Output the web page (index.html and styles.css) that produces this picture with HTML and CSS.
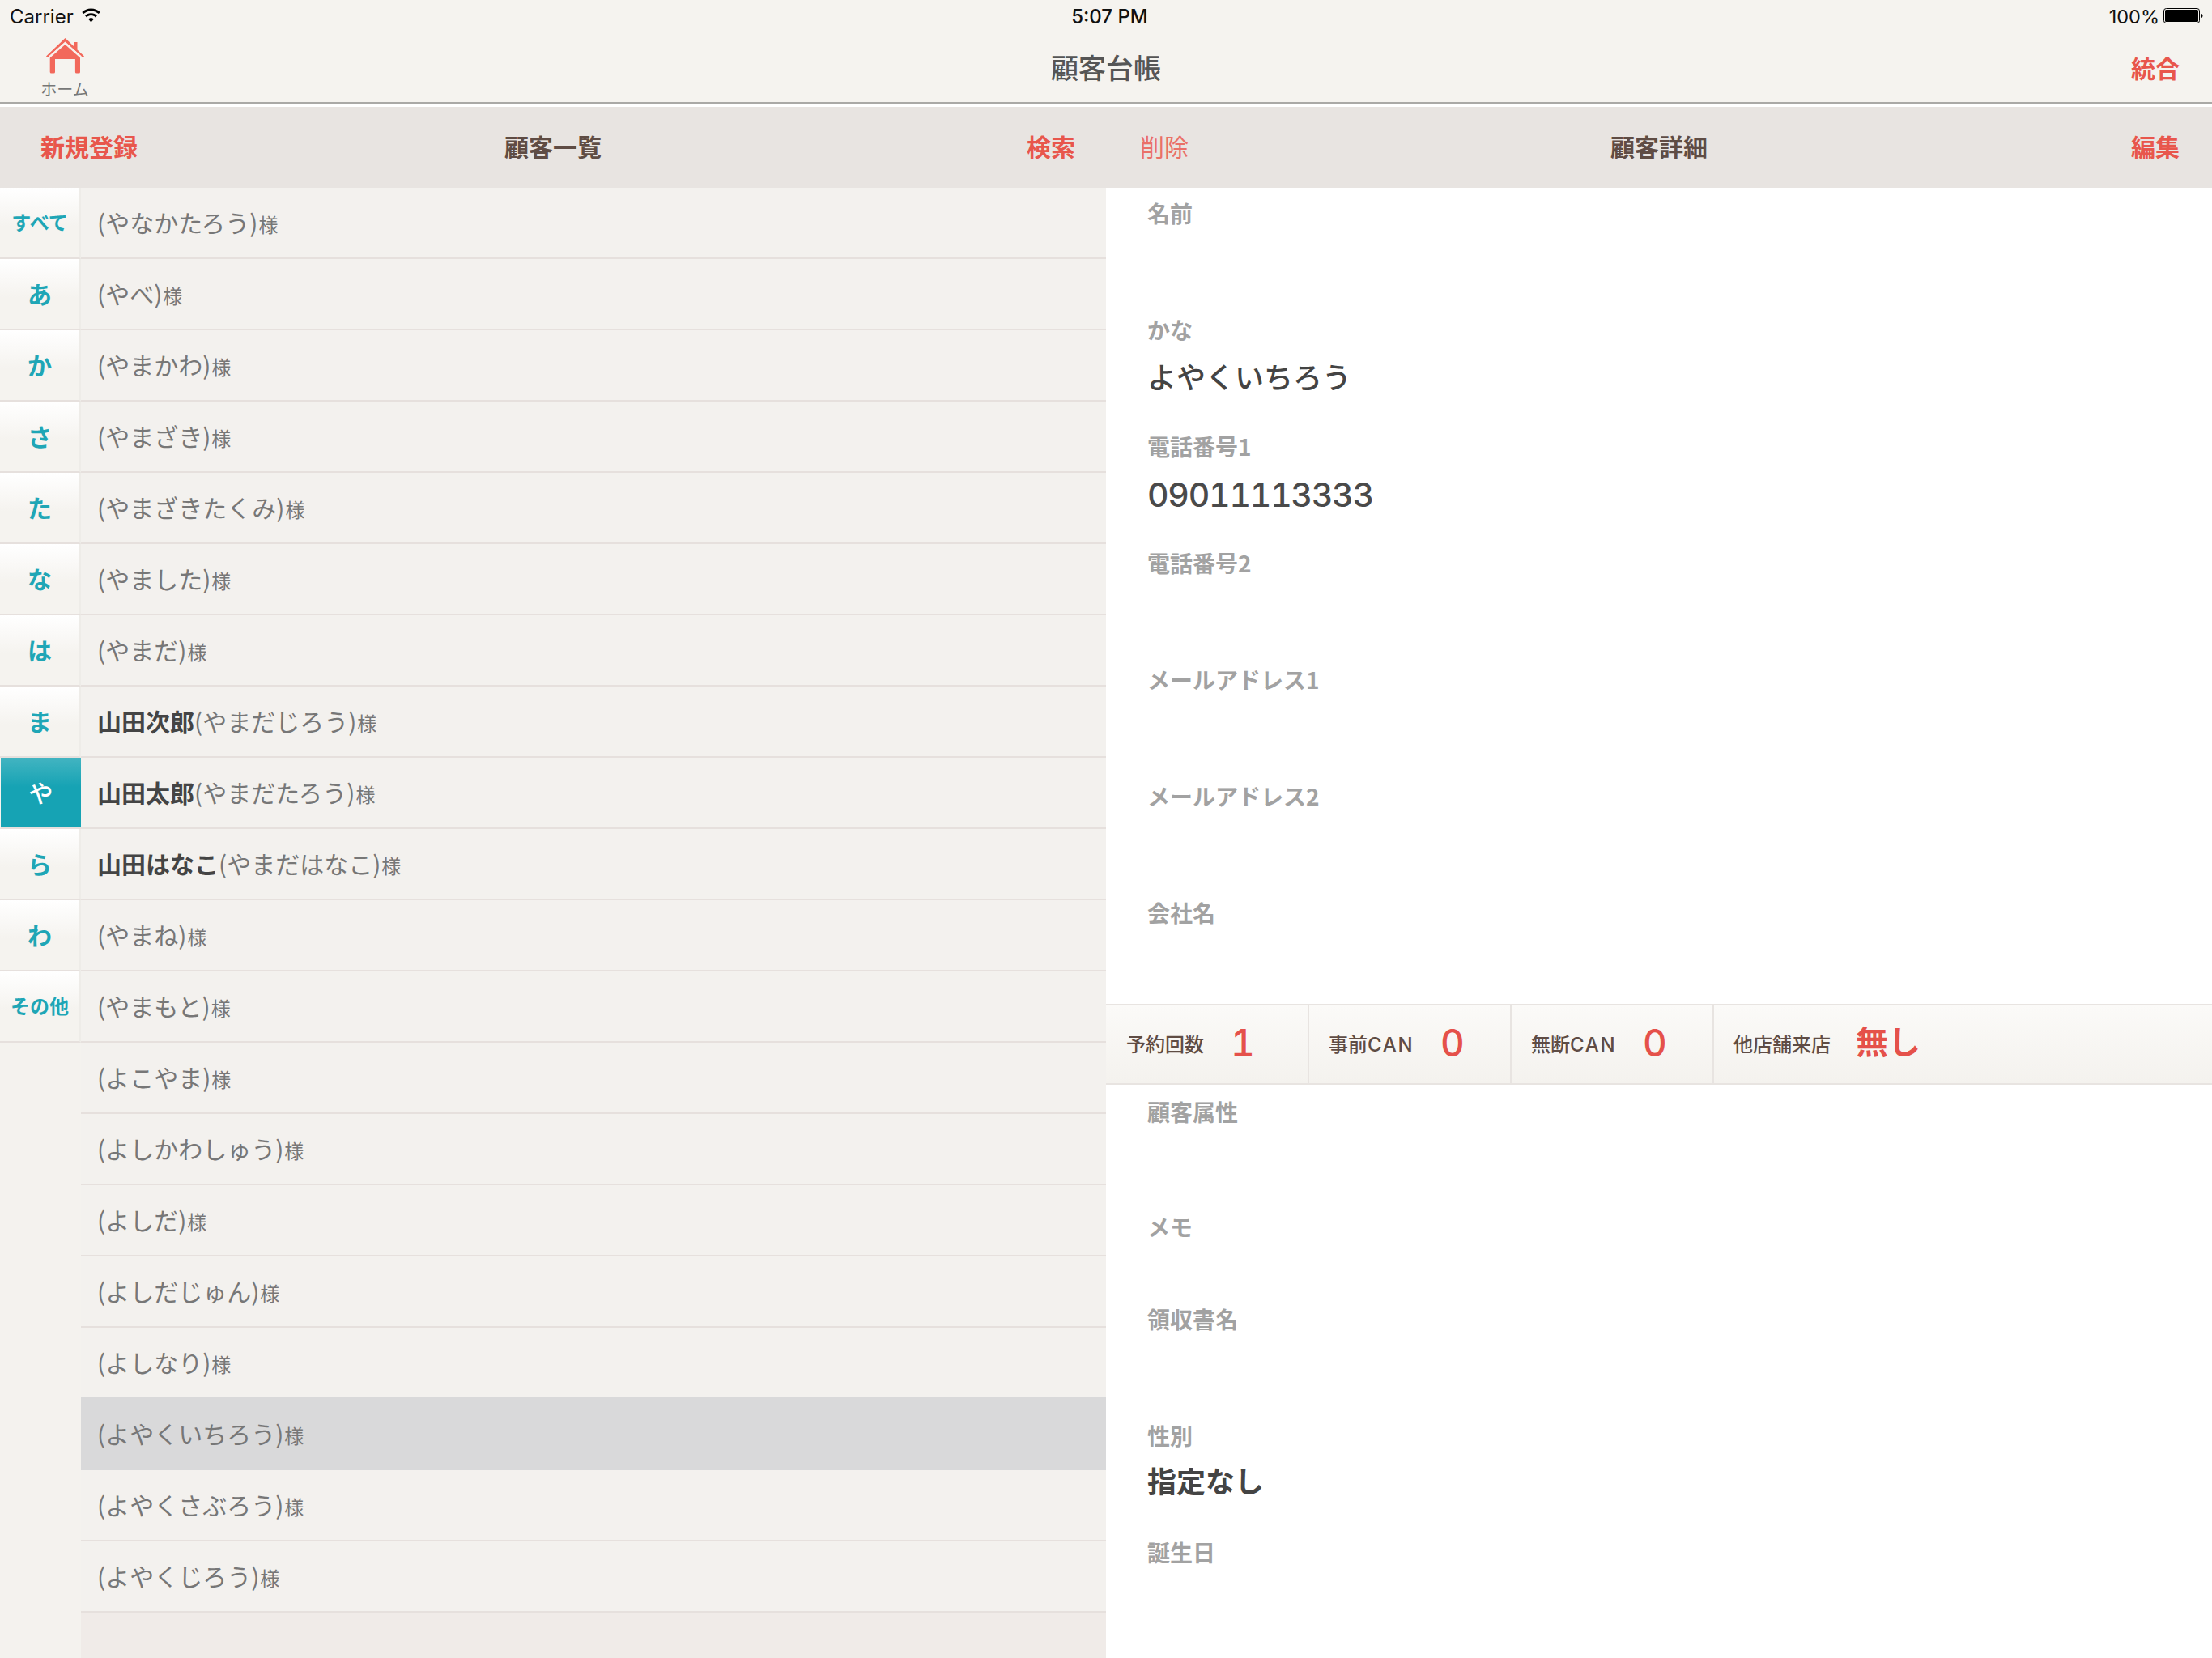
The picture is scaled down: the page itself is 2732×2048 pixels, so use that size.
FILE: index.html
```html
<!DOCTYPE html>
<html lang="ja">
<head>
<meta charset="utf-8">
<title>顧客台帳</title>
<link rel="stylesheet" href="styles.css">
</head>
<body>
<div class="app">
  <header class="top">
    <div class="status">
      <div class="status-left"><span>Carrier</span>
        <svg class="wifi" viewBox="0 0 24 18" width="25" height="18"><path d="M12 17.500 8.600 13.600a5 5 0 0 1 6.800 0Z"/><path d="M12 .5C7.600.5 3.700 2.200.8 5l1.900 2.100C5.100 4.800 8.400 3.400 12 3.400s6.900 1.400 9.300 3.700L23.200 5C20.300 2.200 16.400.5 12 .5Z"/><path d="M12 6.200c-2.900 0-5.500 1.100-7.400 3l2 2.200c1.400-1.400 3.300-2.300 5.400-2.300s4 .9 5.400 2.300l2-2.200c-1.900-1.900-4.500-3-7.400-3Z"/></svg>
      </div>
      <div class="status-time">5:07 PM</div>
      <div class="status-right"><span>100%</span>
        <svg class="battery" viewBox="0 0 49 20" width="49" height="20"><rect x=".5" y=".5" width="44" height="18" rx="3" fill="none" stroke="#000"/><rect x="2" y="2" width="41" height="15" rx="1.500"/><path d="M46 6.500c1.600.3 2.500 1.500 2.500 3s-.9 2.700-2.500 3Z"/></svg>
      </div>
    </div>
    <nav class="nav">
      <div class="home">
        <svg class="home-icon" viewBox="0 0 47 44" width="47" height="44"><path d="M23.500 0 34 10V5h4.500V14.500L46.500 22a1.100 1.100 0 0 1-1.800 1.600L23.500 4.400 2.300 23.600A1.100 1.100 0 0 1 .5 22Z"/><path d="M23.500 8 42 24.500V42a1.600 1.600 0 0 1-1.600 1.600H37.500a1.600 1.600 0 0 1-1.600-1.600V26H11V42a1.600 1.600 0 0 1-1.600 1.600H6.300A1.600 1.600 0 0 1 4.700 42V24.500Z"/><path class="home-gap" d="M4 22.800 23.500 5.900 43 22.800"/></svg>
        <span class="home-label">ホーム</span>
      </div>
      <div class="nav-title">顧客台帳</div>
      <div class="nav-action">統合</div>
    </nav>
  </header>
  <main class="columns">
    <section class="left">
      <div class="bar"><span class="act">新規登録</span><span class="bar-title">顧客一覧</span><span class="act">検索</span></div>
      <div class="list-wrap">
        <ul class="index">
          <li class="small">すべて</li><li>あ</li><li>か</li><li>さ</li><li>た</li><li>な</li><li>は</li><li>ま</li><li class="on">や</li><li>ら</li><li>わ</li><li class="small">その他</li>
        </ul>
        <ul class="rows">
          <li>(やなかたろう)<small>様</small></li>
          <li>(やべ)<small>様</small></li>
          <li>(やまかわ)<small>様</small></li>
          <li>(やまざき)<small>様</small></li>
          <li>(やまざきたくみ)<small>様</small></li>
          <li>(やました)<small>様</small></li>
          <li>(やまだ)<small>様</small></li>
          <li><b>山田次郎</b>(やまだじろう)<small>様</small></li>
          <li><b>山田太郎</b>(やまだたろう)<small>様</small></li>
          <li><b>山田はなこ</b>(やまだはなこ)<small>様</small></li>
          <li>(やまね)<small>様</small></li>
          <li>(やまもと)<small>様</small></li>
          <li>(よこやま)<small>様</small></li>
          <li>(よしかわしゅう)<small>様</small></li>
          <li>(よしだ)<small>様</small></li>
          <li>(よしだじゅん)<small>様</small></li>
          <li class="before-sel">(よしなり)<small>様</small></li>
          <li class="sel">(よやくいちろう)<small>様</small></li>
          <li>(よやくさぶろう)<small>様</small></li>
          <li>(よやくじろう)<small>様</small></li>
        </ul>
      </div>
    </section>
    <section class="right">
      <div class="bar"><span class="act thin">削除</span><span class="bar-title">顧客詳細</span><span class="act">編集</span></div>
      <div class="field"><div class="label">名前</div></div>
      <div class="field"><div class="label">かな</div><div class="value">よやくいちろう</div></div>
      <div class="field"><div class="label">電話番号1</div><div class="value digits">09011113333</div></div>
      <div class="field"><div class="label">電話番号2</div></div>
      <div class="field"><div class="label">メールアドレス1</div></div>
      <div class="field"><div class="label">メールアドレス2</div></div>
      <div class="field"><div class="label">会社名</div></div>
      <div class="stats">
        <div class="stat"><span class="stat-name">予約回数</span><span class="stat-val">1</span></div>
        <div class="stat"><span class="stat-name">事前<span class="latin">CAN</span></span><span class="stat-val">0</span></div>
        <div class="stat"><span class="stat-name">無断<span class="latin">CAN</span></span><span class="stat-val">0</span></div>
        <div class="stat"><span class="stat-name">他店舗来店</span><span class="stat-val kanji">無し</span></div>
      </div>
      <div class="lower">
        <div class="field"><div class="label">顧客属性</div></div>
        <div class="field short"><div class="label">メモ</div></div>
        <div class="field"><div class="label">領収書名</div></div>
        <div class="field"><div class="label">性別</div><div class="value strong">指定なし</div></div>
        <div class="field"><div class="label">誕生日</div></div>
      </div>
    </section>
  </main>
</div>
</body>
</html>
```
FILE: styles.css
```css
* { box-sizing: border-box; }
html, body { margin: 0; padding: 0; }
body {
  width: 2732px;
  height: 2048px;
  overflow: hidden;
  background: #fff;
  font-family: "Noto Sans CJK JP", "Noto Sans", sans-serif;
}
ul { list-style: none; margin: 0; padding: 0; }

.top { height: 132px; background: #f5f3ef; border-bottom: 4px solid #fff; }
.status {
  height: 40px;
  padding: 0 11px 0 12px;
  display: grid;
  grid-template-columns: 1fr auto 1fr;
  align-items: center;
  font-family: Inter, "Liberation Sans", sans-serif;
  font-size: 24px;
  color: #111;
}
.status-left { display: flex; align-items: center; gap: 9px; }
.wifi { fill: #000; margin-top: -2px; }
.status-time { font-weight: 500; margin-left: 8px; }
.status-right { display: flex; align-items: center; justify-content: flex-end; gap: 5px; font-size: 23.500px; }
.nav {
  height: 88px;
  border-bottom: 2px solid #aaa9a6;
  display: grid;
  grid-template-columns: 1fr auto 1fr;
  align-items: center;
  padding: 0 40px;
}
.home {
  width: 60px;
  margin-left: 10px;
  align-self: start;
  padding-top: 7px;
  display: flex;
  flex-direction: column;
  align-items: center;
}
.home-icon { fill: #f2685b; }
.home-gap { fill: none; stroke: #fbeeea; stroke-width: 1.300; }
.home-label { font-size: 20px; line-height: 28px; margin-top: 5px; color: #777; white-space: nowrap; }
.nav-title { font-size: 34px; font-weight: 500; color: #555; line-height: 40px; }
.nav-action { justify-self: end; font-size: 30px; font-weight: 700; color: #e8564c; }

.columns { display: grid; grid-template-columns: 1366px 1366px; height: 1916px; }
.left { background: #f3f1ee; min-width: 0; }
.right { background: #fff; min-width: 0; }
.bar {
  height: 100px;
  background: #e8e4e1;
  display: grid;
  grid-template-columns: 1fr auto 1fr;
  align-items: center;
  padding: 0 38px 5px;
  font-size: 30px;
  font-weight: 700;
}
.right .bar { padding: 0 40px 5px; }
.left .act:first-child { margin-left: 12px; }
.right .act:first-child { margin-left: 2px; }
.bar-title { color: #5f4c44; }
.act { color: #e8564c; }
.act:last-child { justify-self: end; }
.act.thin { font-weight: 400; color: #ea7068; }

.list-wrap { display: flex; height: 1816px; }
.index { width: 100px; flex: none; background: #f4f2ee; }
.index li {
  height: 88px;
  padding-bottom: 3px;
  border-bottom: 2px solid #e6e0dd;
  border-right: 2px solid #eeece8;
  background: linear-gradient(#fff, #f5f3ef 55%);
  display: flex;
  align-items: center;
  justify-content: center;
  color: #1fa6b6;
  font-weight: 700;
  font-size: 30px;
}
.index li.small { font-size: 24px; white-space: nowrap; }
.index li.on {
  background: linear-gradient(#42b4c1, #16a3b4 42%);
  color: #fff;
  font-weight: 500;
  border-right: 0;
  border-left: 1px solid #f5f3ef;
}
.rows { flex: 1; background: #f0ebe8; }
.rows li {
  height: 88px;
  border-bottom: 2px solid #e6e0dd;
  background: #f3f1ee;
  padding-left: 20px;
  display: flex;
  align-items: baseline;
  line-height: 84px;
  font-size: 30px;
  color: #777;
  white-space: nowrap;
}
.rows li b { color: #444; font-weight: 700; }
.rows li small { font-size: 24px; margin-left: 1px; color: #777; }
.rows li.before-sel { border-bottom-color: #d9d9da; }
.rows li.sel { background: #d9d9da; border-bottom-color: #d9d9da; }

.field { height: 144px; padding: 11px 0 0 51px; }
.lower .field { padding-top: 13px; }
.lower .field.short { height: 112px; padding-top: 11px; }
.label { font-size: 28px; line-height: 40px; color: #a2a2a2; font-weight: 700; }
.value { font-size: 36px; font-weight: 500; line-height: 52px; margin-top: 11px; color: #444; }
.value.digits {
  font-family: Inter, "Noto Sans CJK JP", sans-serif;
  font-size: 41px;
  font-weight: 500;
  font-feature-settings: "tnum";
  letter-spacing: -1.200px;
  color: #4a4a4a;
  margin-top: 14px;
}
.value.strong { font-weight: 700; margin-top: 9px; }

.stats {
  height: 100px;
  padding-left: 1px;
  display: flex;
  border-top: 2px solid #e8e4e1;
  border-bottom: 2px solid #e8e4e1;
  background: linear-gradient(#fbfaf8, #f4f2ee);
}
.stat {
  width: 250px;
  border-right: 2px solid #e8e4e1;
  padding: 0 0 4px 24px;
  display: flex;
  align-items: center;
}
.stat:last-child { border-right: 0; flex: 1; }
.stat-name {
  width: 115px;
  flex: none;
  font-family: Inter, "Noto Sans CJK JP", sans-serif;
  font-size: 24px;
  color: #5f4c44;
  font-weight: 500;
  white-space: nowrap;
}
.latin { letter-spacing: 1.700px; }
.stat-val {
  font-family: Inter, "Noto Sans CJK JP", sans-serif;
  font-size: 46px;
  font-weight: 500;
  font-feature-settings: "tnum";
  line-height: 1;
  color: #e5514a;
  padding-left: 23px;
}
.stat:first-child .stat-val { padding-left: 14px; }
.stat-val.kanji { font-size: 40px; padding-left: 0; margin-left: 36px; font-weight: 700; }
```
